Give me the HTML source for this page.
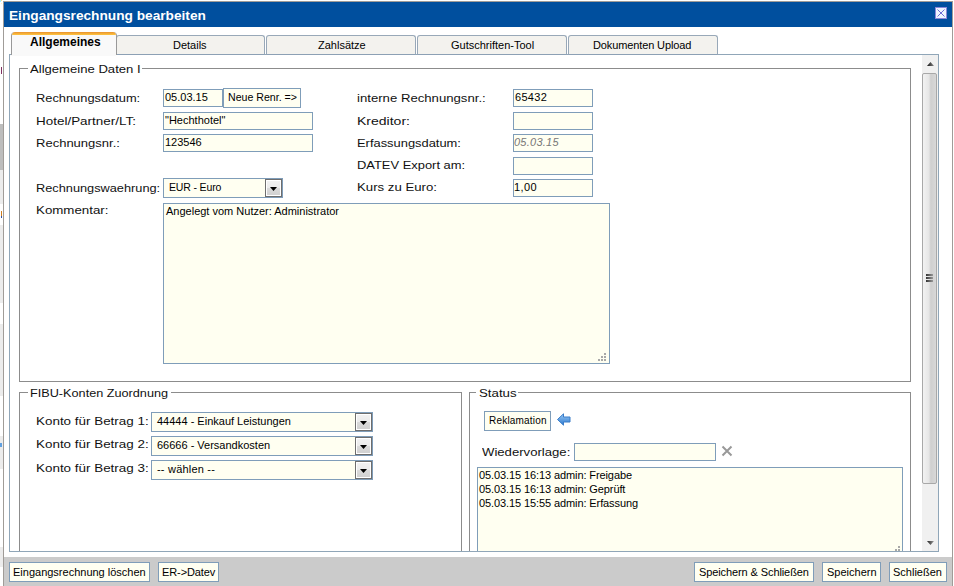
<!DOCTYPE html>
<html><head><meta charset="utf-8">
<style>
*{box-sizing:border-box;margin:0;padding:0}
html,body{width:954px;height:586px;overflow:hidden;background:#fff;font-family:"Liberation Sans",sans-serif;color:#000}
.a{position:absolute}
.t{position:absolute;white-space:pre;line-height:1}
.v{font-size:11px;transform:scaleX(1.16);transform-origin:0 0;color:#111}
.f11{font-size:11px}
.inp{position:absolute;background:#fffff1;border:1px solid #7f9db9}
.btn{position:absolute;background:#fffff1;border:1px solid #7f9db9;height:20px}
.fs{position:absolute;border:1px solid #8c8c8c}
.lg{position:absolute;background:#fff;height:12px}
.sel{position:absolute;background:#fffff1;border:1px solid #7f9db9;height:20px}
.dd{position:absolute;right:0;top:0;width:17px;height:18px;border:1px solid #6e6e6e;box-shadow:inset 0 0 0 1px #fff;background:linear-gradient(#f2f2f2 0,#ebebeb 48%,#dadada 52%,#d0d0d0 100%)}
.dd:after{content:"";position:absolute;left:4px;top:7px;width:7px;height:4px;background:#000;clip-path:polygon(0 0,100% 0,50% 100%)}
.tab{position:absolute;top:35px;height:20px;background:#f3f2ee;border:1px solid #98a8b8;border-bottom-color:#8ca0b4;border-radius:3px 3px 0 0}
</style></head><body>
<!-- page background bits at left -->
<div class="a" style="left:0;top:124px;width:3px;height:46px;background:#bdbdbd"></div>
<div class="a" style="left:0;top:170px;width:3px;height:34px;background:#ececec"></div>
<div class="a" style="left:0;top:225px;width:3px;height:78px;background:#ececec"></div>
<div class="a" style="left:0;top:324px;width:3px;height:72px;background:#ececec"></div>
<div class="a" style="left:0;top:436px;width:3px;height:33px;background:#ececec"></div>
<div class="a" style="left:0;top:547px;width:3px;height:20px;background:#ececec"></div>
<div class="a" style="left:1px;top:211px;width:1px;height:5px;background:#d08020"></div>
<div class="a" style="left:1px;top:216px;width:1px;height:2px;background:#3050a0"></div>
<div class="a" style="left:0;top:443px;width:2px;height:4px;background:#60a0e0"></div>
<div class="a" style="left:1px;top:67px;width:1px;height:7px;background:#803060"></div>

<!-- dialog -->
<div class="a" style="left:3px;top:1px;width:950px;height:600px;border:1px solid #a09c98;background:#fff"></div>
<div class="a" style="left:4px;top:2px;width:948px;height:25px;background:#004f9e"></div>
<div class="t" style="left:9px;top:10px;font-size:12px;font-weight:bold;color:#fff;transform:scaleX(1.14);transform-origin:0 0">Eingangsrechnung bearbeiten</div>
<div class="a" style="left:935px;top:7px;width:12px;height:12px;border:1px solid #8a86d8;background:#eef4ff">
<svg width="10" height="10" style="position:absolute;left:0;top:0"><path d="M1.5 1.5L8.5 8.5M8.5 1.5L1.5 8.5" stroke="#6c6cd4" stroke-width="1"/></svg>
</div>

<!-- tabs -->
<div class="a" style="left:9px;top:54px;width:930px;height:498px;border:1px solid #90a6b8"></div>
<div class="a" style="left:11px;top:32px;width:106px;height:23px;background:#f9f9f9;border-left:1px solid #999;border-right:1px solid #999;border-radius:4px 4px 0 0;overflow:hidden;z-index:2">
  <div class="a" style="left:0;top:0;width:106px;height:3px;background:linear-gradient(#e8922e,#ffc640)"></div>
</div>
<div class="t" style="left:30px;top:36px;font-size:12px;font-weight:bold;z-index:3">Allgemeines</div>
<div class="tab" style="left:116px;width:149px"></div>
<div class="t f11" style="left:173px;top:40px">Details</div>
<div class="tab" style="left:266px;width:150px"></div>
<div class="t f11" style="left:318px;top:40px">Zahlsätze</div>
<div class="tab" style="left:417px;width:150px"></div>
<div class="t f11" style="left:451px;top:40px">Gutschriften-Tool</div>
<div class="tab" style="left:568px;width:150px"></div>
<div class="t f11" style="left:593px;top:40px;letter-spacing:-0.12px">Dokumenten Upload</div>
<div class="a" style="left:10px;top:55px;width:106px;height:1px;background:#f9f9f9"></div>

<!-- scrollbar -->
<div class="a" style="left:922px;top:55px;width:16px;height:496px;background:#f0f0f0"></div>
<div class="a" style="left:922px;top:73px;width:15px;height:411px;border:1px solid #a8a8a8;border-radius:2px;background:linear-gradient(90deg,#f2f2f2,#e6e6e6 45%,#cfcfcf 60%,#d8d8d8)"></div>
<div class="a" style="left:927px;top:62px;width:7px;height:4px;background:linear-gradient(90deg,#111,#888);clip-path:polygon(50% 0,100% 100%,0 100%)"></div>
<div class="a" style="left:927px;top:541px;width:7px;height:4px;background:linear-gradient(90deg,#222,#999);clip-path:polygon(0 0,100% 0,50% 100%)"></div>
<div class="a" style="left:926px;top:274px;width:7px;height:2px;background:linear-gradient(90deg,#333,#999)"></div>
<div class="a" style="left:926px;top:277px;width:7px;height:2px;background:linear-gradient(90deg,#333,#999)"></div>
<div class="a" style="left:926px;top:280px;width:7px;height:2px;background:linear-gradient(90deg,#333,#999)"></div>

<!-- Allgemeine Daten I -->
<div class="fs" style="left:19px;top:68px;width:892px;height:314px"></div>
<div class="lg" style="left:28px;top:63px;width:114px"></div>
<div class="t v" style="left:30px;top:64px;transform:scaleX(1.190)">Allgemeine Daten I</div>

<div class="t v" style="left:36px;top:93px;transform:scaleX(1.167)">Rechnungsdatum:</div>
<div class="t v" style="left:36px;top:116px;transform:scaleX(1.223)">Hotel/Partner/LT:</div>
<div class="t v" style="left:36px;top:138px;transform:scaleX(1.183)">Rechnungsnr.:</div>
<div class="t v" style="left:36px;top:183px;transform:scaleX(1.160)">Rechnungswaehrung:</div>
<div class="t v" style="left:36px;top:205px;transform:scaleX(1.210)">Kommentar:</div>

<div class="inp" style="left:163px;top:89px;width:60px;height:18px"></div>
<div class="t f11" style="left:165px;top:92px">05.03.15</div>
<div class="btn" style="left:223px;top:88px;width:78px"></div>
<div class="t" style="left:228px;top:92px;font-size:10.6px">Neue Renr. =&gt;</div>
<div class="inp" style="left:163px;top:112px;width:150px;height:18px"></div>
<div class="t f11" style="left:165px;top:115px">"Hechthotel"</div>
<div class="inp" style="left:163px;top:134px;width:150px;height:18px"></div>
<div class="t f11" style="left:165px;top:137px">123546</div>
<div class="sel" style="left:163px;top:178px;width:120px"><div class="dd"></div></div>
<div class="t" style="left:169px;top:182px;font-size:10.5px;letter-spacing:-0.15px">EUR - Euro</div>
<div class="inp" style="left:163px;top:203px;width:447px;height:161px"></div>
<div class="a" style="left:604px;top:353px;width:2px;height:2px;background:#a8a8a8"></div><div class="a" style="left:601px;top:356px;width:2px;height:2px;background:#a8a8a8"></div><div class="a" style="left:604px;top:356px;width:2px;height:2px;background:#a8a8a8"></div><div class="a" style="left:598px;top:359px;width:2px;height:2px;background:#a8a8a8"></div><div class="a" style="left:601px;top:359px;width:2px;height:2px;background:#a8a8a8"></div><div class="a" style="left:604px;top:359px;width:2px;height:2px;background:#a8a8a8"></div>
<div class="t f11" style="left:166px;top:206px">Angelegt vom Nutzer: Administrator</div>

<div class="t v" style="left:357px;top:93px;transform:scaleX(1.196)">interne Rechnungsnr.:</div>
<div class="t v" style="left:357px;top:116px;transform:scaleX(1.274)">Kreditor:</div>
<div class="t v" style="left:357px;top:138px;transform:scaleX(1.172)">Erfassungsdatum:</div>
<div class="t v" style="left:357px;top:160px;transform:scaleX(1.174)">DATEV Export am:</div>
<div class="t v" style="left:357px;top:182px;transform:scaleX(1.199)">Kurs zu Euro:</div>
<div class="inp" style="left:513px;top:89px;width:80px;height:18px"></div>
<div class="t f11" style="left:515px;top:92px;letter-spacing:0.3px">65432</div>
<div class="inp" style="left:513px;top:112px;width:80px;height:18px"></div>
<div class="inp" style="left:513px;top:134px;width:80px;height:18px"></div>
<div class="t f11" style="left:514px;top:137px;font-style:italic;color:#777;letter-spacing:0.25px">05.03.15</div>
<div class="inp" style="left:513px;top:157px;width:80px;height:18px"></div>
<div class="inp" style="left:513px;top:179px;width:80px;height:18px"></div>
<div class="t f11" style="left:514px;top:182px;letter-spacing:0.4px">1,00</div>

<!-- clip area for lower fieldsets -->
<div class="a" style="left:10px;top:55px;width:912px;height:496px;overflow:hidden">
 <div class="fs" style="left:9px;top:337px;width:443px;height:300px"></div>
 <div class="lg" style="left:18px;top:332px;width:143px"></div>
 <div class="t v" style="left:20px;top:333px;transform:scaleX(1.152)">FIBU-Konten Zuordnung</div>
 <div class="t v" style="left:26px;top:361px;transform:scaleX(1.220)">Konto für Betrag 1:</div>
 <div class="t v" style="left:26px;top:384px;transform:scaleX(1.220)">Konto für Betrag 2:</div>
 <div class="t v" style="left:26px;top:408px;transform:scaleX(1.220)">Konto für Betrag 3:</div>
 <div class="sel" style="left:141px;top:357px;width:222px"><div class="dd"></div></div>
 <div class="t f11" style="left:147px;top:361px">44444 - Einkauf Leistungen</div>
 <div class="sel" style="left:141px;top:381px;width:222px"><div class="dd"></div></div>
 <div class="t f11" style="left:147px;top:385px">66666 - Versandkosten</div>
 <div class="sel" style="left:141px;top:405px;width:222px"><div class="dd"></div></div>
 <div class="t f11" style="left:147px;top:409px;letter-spacing:0.2px">-- wählen --</div>

 <div class="fs" style="left:459px;top:337px;width:442px;height:300px"></div>
 <div class="lg" style="left:466px;top:332px;width:42px"></div>
 <div class="t v" style="left:469px;top:333px;transform:scaleX(1.204)">Status</div>
 <div class="btn" style="left:474px;top:356px;width:67px"></div>
 <div class="t" style="left:479px;top:361px;font-size:10px;letter-spacing:0.2px">Reklamation</div>
 <svg class="a" style="left:547px;top:358px" width="14" height="13"><defs><linearGradient id="ag" x1="0" y1="0" x2="0" y2="1"><stop offset="0" stop-color="#9ccaf4"/><stop offset="1" stop-color="#2a78d0"/></linearGradient></defs><path d="M0.5 6.5L6.5 0.8V4H13V9H6.5V12.2Z" fill="url(#ag)" stroke="#3a7cc8" stroke-width="1"/></svg>
 <div class="t v" style="left:472px;top:392px;transform:scaleX(1.194)">Wiedervorlage:</div>
 <div class="inp" style="left:564px;top:388px;width:142px;height:18px"></div>
 <svg class="a" style="left:711px;top:390px" width="12" height="12"><path d="M1.5 1.5L10.5 10.5M10.5 1.5L1.5 10.5" stroke="#999" stroke-width="2"/></svg>
 <div class="inp" style="left:467px;top:412px;width:426px;height:200px"></div>
 <div class="t f11" style="left:469px;top:413px;line-height:14px;letter-spacing:-0.1px">05.03.15 16:13 admin: Freigabe
05.03.15 16:13 admin: Geprüft
05.03.15 15:55 admin: Erfassung</div>
</div>

<div class="a" style="left:898px;top:546px;width:2px;height:2px;background:#a8a8a8"></div><div class="a" style="left:895px;top:549px;width:2px;height:2px;background:#a8a8a8"></div><div class="a" style="left:898px;top:549px;width:2px;height:2px;background:#a8a8a8"></div>
<div class="a" style="left:0;top:0;width:1px;height:2px;background:#a8f0ff"></div><div class="a" style="left:1px;top:0;width:1px;height:1px;background:#ffd890"></div><div class="a" style="left:1px;top:3px;width:1px;height:1px;background:#fff4c8"></div>
<!-- footer -->
<div class="a" style="left:4px;top:557px;width:948px;height:29px;background:#cbcbcb"></div>
<div class="btn" style="left:9px;top:562px;width:141px"></div>
<div class="t f11" style="left:13px;top:567px">Eingangsrechnung löschen</div>
<div class="btn" style="left:158px;top:562px;width:61px"></div>
<div class="t f11" style="left:162px;top:567px;letter-spacing:-0.1px">ER-&gt;Datev</div>
<div class="btn" style="left:694px;top:562px;width:120px"></div>
<div class="t f11" style="left:699px;top:567px;letter-spacing:-0.1px">Speichern &amp; Schließen</div>
<div class="btn" style="left:822px;top:562px;width:59px"></div>
<div class="t f11" style="left:827px;top:567px">Speichern</div>
<div class="btn" style="left:889px;top:562px;width:58px"></div>
<div class="t f11" style="left:893px;top:567px">Schließen</div>
</body></html>
